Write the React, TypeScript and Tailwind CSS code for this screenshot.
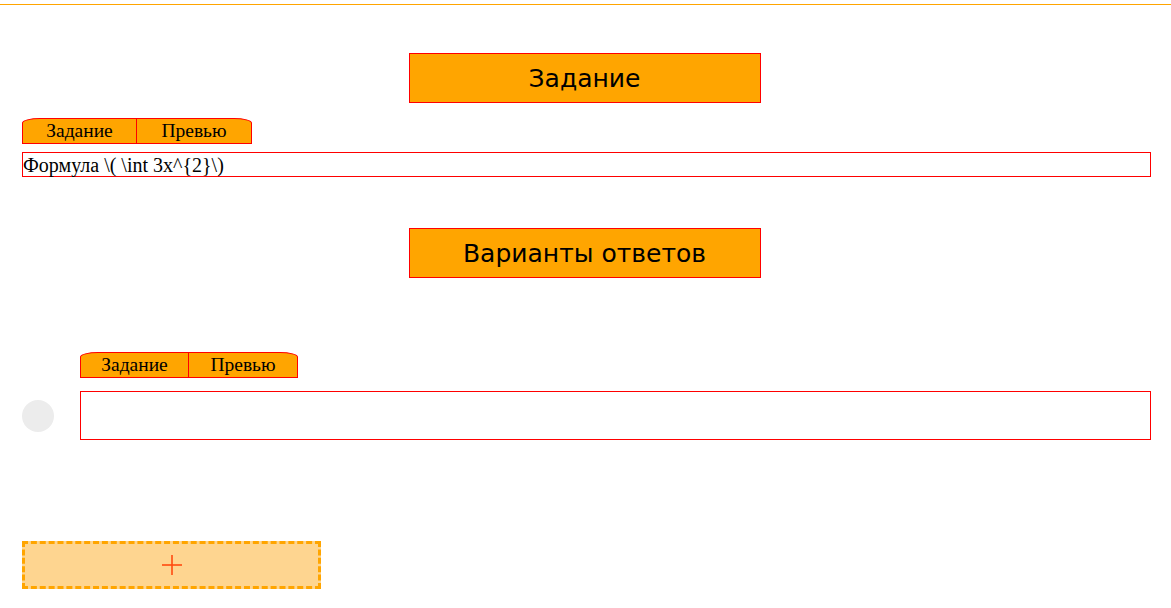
import React from "react";

function Tabs({ w1, w2 }: { w1: string; w2: string }) {
  return (
    <div className="flex h-[26px] border border-[#ff0000] rounded-t-[18px_5px] overflow-hidden bg-[#ffa500] font-['Liberation_Serif',serif] text-[19.5px] text-black leading-none w-fit">
      <div className={`${w1} flex items-center justify-center border-r border-[#ff0000]`}>Задание</div>
      <div className={`${w2} flex items-center justify-center`}>Превью</div>
    </div>
  );
}

function Header({ text }: { text: string }) {
  return (
    <div className="flex justify-center pr-[2px]">
      <div className="w-[352px] h-[50px] border border-[#ff0000] bg-[#ffa500] flex items-center justify-center font-['DejaVu_Sans',sans-serif] text-[25px] text-black pt-[1px]">
        {text}
      </div>
    </div>
  );
}

export default function App() {
  return (
    <div className="w-[1171px] h-[608px] bg-white overflow-hidden">
      <div className="h-[4px]" />
      <div className="h-px bg-[#ffa500]" />
      <div className="h-[48px]" />
      <Header text="Задание" />
      <div className="pl-[22px] pr-[20px]">
        <div className="mt-[15px]">
          <Tabs w1="w-[114px]" w2="w-[114px]" />
        </div>
        <div className="mt-[8px] h-[25px] border border-[#ff0000] flex items-center font-['Liberation_Serif',serif] text-[20px] text-black leading-none">
          Формула \( \int 3x^{"{2}"}\)
        </div>
      </div>
      <div className="mt-[51px]">
        <Header text="Варианты ответов" />
      </div>
      <div className="pl-[22px] pr-[20px]">
        <div className="mt-[74px] pl-[58px]">
          <Tabs w1="w-[108px]" w2="w-[108px]" />
        </div>
        <div className="mt-[13px] flex items-center gap-[26px]">
          <div className="w-[32px] h-[32px] rounded-full bg-[#ececec] shrink-0" />
          <div className="flex-1 h-[49px] border border-[#ff0000]" />
        </div>
        <div className="mt-[101px] w-[299px] h-[48px] border-[3px] border-dashed border-[#ffa500] bg-[#fed590] flex items-center justify-center">
          <svg width="22" height="22" viewBox="0 0 22 22">
            <line x1="1" y1="11" x2="21" y2="11" stroke="#ff4a10" strokeWidth="1.6" />
            <line x1="11" y1="1" x2="11" y2="21" stroke="#ff4a10" strokeWidth="1.6" />
          </svg>
        </div>
      </div>
    </div>
  );
}
